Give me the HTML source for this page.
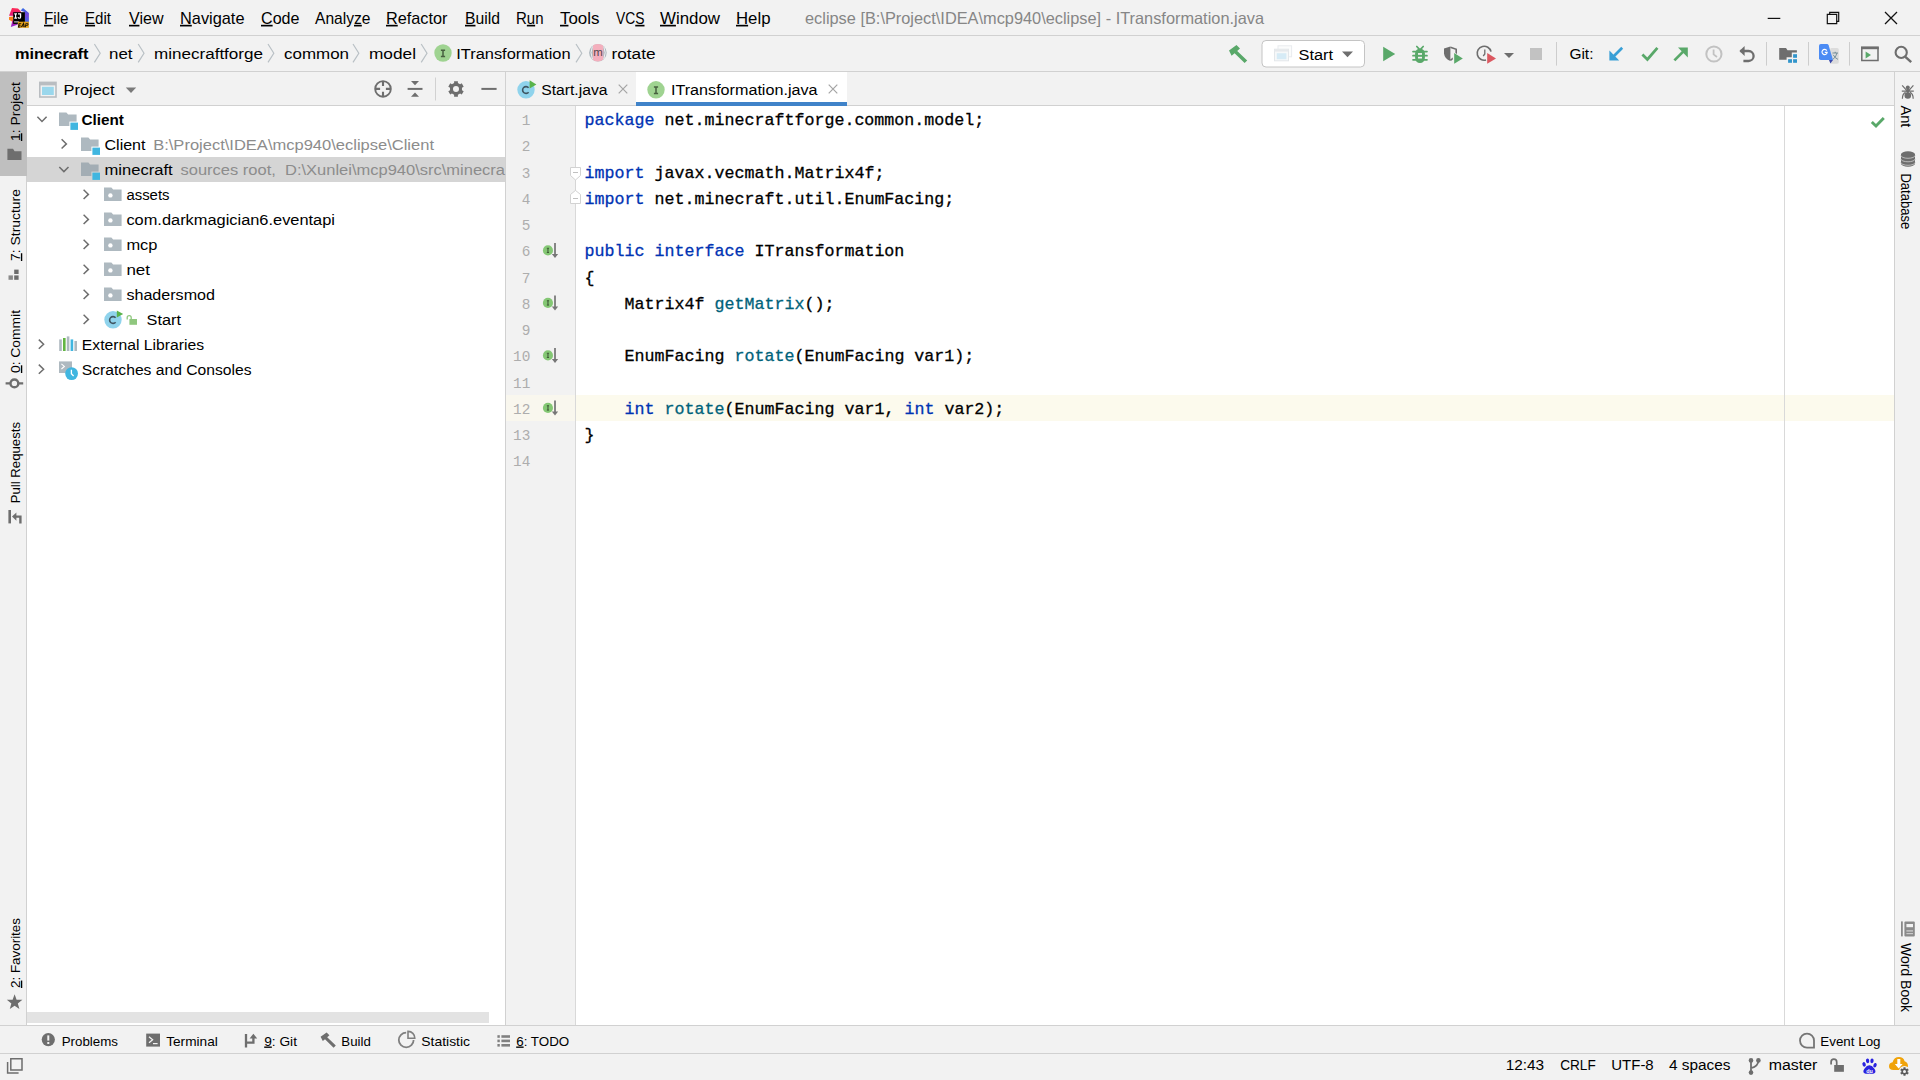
<!DOCTYPE html>
<html><head><meta charset="utf-8"><title>ITransformation.java</title>
<style>
html,body{margin:0;padding:0;background:#f2f2f2;overflow:hidden}
body{width:1920px;height:1080px;font-family:"Liberation Sans",sans-serif}
svg{display:block;position:absolute;left:0;top:0;font-family:"Liberation Sans",sans-serif}
</style></head><body>
<svg width="1920" height="1080" viewBox="0 0 1920 1080">
<rect x="0" y="0" width="1920" height="1080" fill="#f2f2f2" />
<rect x="27" y="106" width="478" height="919" fill="#fff" />
<rect x="27" y="157" width="478" height="25" fill="#d5d5d5" />
<rect x="506" y="106" width="70" height="919" fill="#f2f2f2" />
<rect x="576" y="106" width="1318" height="919" fill="#fff" />
<rect x="506" y="395" width="70" height="26" fill="#f9f7ee" />
<rect x="576" y="395" width="1318" height="26" fill="#fcfaed" />
<rect x="575" y="106" width="1" height="919" fill="#d9d9d9" />
<rect x="1784" y="106" width="1" height="919" fill="#d9d9d9" />
<rect x="636" y="72" width="211" height="33" fill="#fff" />
<rect x="0" y="35" width="1920" height="1" fill="#d1d1d1" />
<rect x="0" y="71" width="1920" height="1" fill="#d1d1d1" />
<rect x="27" y="105" width="1867" height="1" fill="#d1d1d1" />
<rect x="0" y="1025" width="1920" height="1" fill="#d1d1d1" />
<rect x="0" y="1053" width="1920" height="1" fill="#d1d1d1" />
<rect x="26" y="72" width="1" height="953" fill="#d1d1d1" />
<rect x="505" y="72" width="1" height="953" fill="#d1d1d1" />
<rect x="1894" y="72" width="1" height="953" fill="#d1d1d1" />
<rect x="636" y="102" width="211" height="4" fill="#4083c9" />
<rect x="27" y="1012" width="462" height="11" fill="#e3e3e3" />
<rect x="0" y="72" width="27" height="104" fill="#bfbfbf" />
<defs><linearGradient id="lgA" x1="0" y1="0" x2="0" y2="1"><stop offset="0" stop-color="#ff2a55"/><stop offset="1" stop-color="#e0187c"/></linearGradient><linearGradient id="lgB" x1="0" y1="0" x2="0" y2="1"><stop offset="0" stop-color="#2f6fe6"/><stop offset="0.5" stop-color="#7a45dd"/><stop offset="1" stop-color="#3d6fe8"/></linearGradient><linearGradient id="lgC" x1="0" y1="0" x2="0" y2="1"><stop offset="0" stop-color="#c0158f"/><stop offset="1" stop-color="#8f25d2"/></linearGradient></defs>
<path d="M12 8.1 L18 8.5 L21 11.6 L21 16 L9 15.8 Z" fill="url(#lgA)" />
<path d="M9 17 L13.4 16.6 L13.4 22.2 L9 19.8 Z" fill="#fc801d" />
<path d="M12.6 20 L18 24.4 L10.8 26.9 Z" fill="url(#lgC)" />
<path d="M23 7.9 L28.9 13 L28.9 22.4 L24.4 22.4 L24.4 12 L20.6 10.6 Z" fill="url(#lgB)" />
<rect x="13.2" y="12.2" width="11.7" height="11.7" fill="#000" />
<path d="M14.2 13.2 H17 V14.4 H16.2 V17.5 H17 V18.7 H14.2 V17.5 H15 V14.4 H14.2 Z" fill="#fff" />
<path d="M18 13.2 H21.2 V16.9 Q21.2 18.8 19.3 18.8 Q17.7 18.8 17.5 17.3 L18.7 17.1 Q18.8 17.7 19.3 17.7 Q19.9 17.7 19.9 16.9 V14.4 H18 Z" fill="#fff" />
<rect x="14.1" y="21.1" width="4.7" height="1.5" fill="#9a9a9a" />
<rect x="17.9" y="21.7" width="11" height="6.1" fill="#e5a11c" />
<g transform="translate(4.5 0.6) skewX(-12)" fill="none" stroke="#140e00" stroke-width="0.95"><path d="M21.6 23 H19.5 V26.4 H21.6 M19.5 24.7 H21.3"/><path d="M22.4 26.6 L23.9 22.8 L25.4 26.6 M23 25.5 H24.8"/><path d="M26.4 26.6 V23 H27.6 Q28.6 23 28.6 24 Q28.6 25 27.6 25 H26.4"/></g>
<rect x="1767.7" y="17.8" width="12.6" height="1.2" fill="#111" />
<path d="M1827.3 14.3 H1836.7 V23.7 H1827.3 Z" fill="none" stroke="#111" stroke-width="1.2" />
<path d="M1829.7 14.3 V12.3 H1838.7 V21.3 H1836.7" fill="none" stroke="#111" stroke-width="1.2" />
<path d="M1885 12 L1897 24 M1897 12 L1885 24" fill="none" stroke="#111" stroke-width="1.3" />
<path d="M94.4 44 L100.2 53.2 L94.4 62.4" fill="none" stroke="#b9c0c5" stroke-width="1.2" />
<path d="M138.2 44 L144.0 53.2 L138.2 62.4" fill="none" stroke="#b9c0c5" stroke-width="1.2" />
<path d="M268 44 L273.8 53.2 L268 62.4" fill="none" stroke="#b9c0c5" stroke-width="1.2" />
<path d="M353 44 L358.8 53.2 L353 62.4" fill="none" stroke="#b9c0c5" stroke-width="1.2" />
<path d="M421.2 44 L427.0 53.2 L421.2 62.4" fill="none" stroke="#b9c0c5" stroke-width="1.2" />
<path d="M576 44 L581.8 53.2 L576 62.4" fill="none" stroke="#b9c0c5" stroke-width="1.2" />
<circle cx="443" cy="53" r="8.7" fill="#9fd391" />
<path d="M440.9 50.199999999999996 H445.1 M440.9 56.6 H445.1 M443 50.199999999999996 V56.6" fill="none" stroke="#47603f" stroke-width="1.5" />
<clipPath id="mclip"><rect x="592.9" y="40" width="10.4" height="26"/></clipPath>
<circle cx="597.9" cy="52.7" r="8.8" fill="#adb7be" />
<circle cx="597.9" cy="52.7" r="8.8" fill="#f4afbd" clip-path="url(#mclip)"/>
<path d="M592.4 46.4 Q589.6 52.7 592.4 59 M603.8 46.4 Q606.6 52.7 603.8 59" fill="none" stroke="#f7f7f7" stroke-width="0.9" />
<text x="598.1" y="56.4" font-size="11.4" fill="#55474c" text-anchor="middle">m</text>
<path d="M1229 50.5 L1236.5 45 L1240 48.6 L1237.2 51 L1247.2 60.4 L1244.6 63 L1234.6 53.2 L1231.6 55.8 Z" fill="#59a869" />
<rect x="1262" y="40.5" width="102.5" height="26.5" rx="4" fill="#fff" stroke="#c4c4c4" stroke-width="1"/>
<rect x="1278" y="45.8" width="13.6" height="11" fill="#fbfcfc" stroke="#e9ecef" stroke-width="1"/>
<rect x="1274.5" y="49.2" width="14" height="11.6" fill="#f6f8f9" stroke="#e3e7ea" stroke-width="1"/>
<rect x="1274.5" y="49.2" width="14" height="2.4" fill="#e6e9ec" />
<rect x="1276.8" y="53.2" width="9.6" height="6" fill="#d6ebf6" />
<path d="M1342 51.5 L1353 51.5 L1347.5 57.2 Z" fill="#6e6e6e" />
<path d="M1383.2 46.8 L1395.2 54 L1383.2 61.2 Z" fill="#59a869" />
<rect x="1415.1" y="48.4" width="9.8" height="14.5" rx="4.7" ry="5.2" fill="#59a869"/>
<path d="M1413 51.6 H1427 M1413 55.7 H1427 M1413 59.8 H1427 M1416.8 46.5 L1419 48.8 M1423.2 46.5 L1421 48.8" fill="none" stroke="#59a869" stroke-width="1.7" stroke-linecap="round"/>
<rect x="1418" y="53.1" width="4" height="1.7" fill="#f2f2f2" />
<rect x="1418" y="56.8" width="4" height="1.7" fill="#f2f2f2" />
<path d="M1450.4 46.4 L1444 48.6 V53.4 Q1444.6 58.6 1450.4 61 Z" fill="#6e6e6e" />
<path d="M1450.4 47.2 L1456.2 49.2 V53.4 Q1455.8 57.4 1450.4 60.2" fill="none" stroke="#6e6e6e" stroke-width="1.6" />
<path d="M1452.8 51.6 L1464.6 58.4 L1452.8 65.2 Z" fill="#f2f2f2" />
<path d="M1454.2 53 L1462.8 58.4 L1454.2 63.8 Z" fill="#59a869" />
<path d="M1491 51.6 A7 7 0 1 0 1486 60" fill="none" stroke="#6e6e6e" stroke-width="1.6" />
<path d="M1484.8 49.6 V54 L1483.2 56" fill="none" stroke="#6e6e6e" stroke-width="1.3" />
<path d="M1487.2 53 L1496 58.4 L1487.2 63.8 Z" fill="#db5860" />
<path d="M1504 53 L1514 53 L1509.0 58 Z" fill="#6e6e6e" />
<rect x="1530" y="48" width="12" height="12" fill="#c2c2c2" />
<rect x="1556" y="42" width="1" height="23.6" fill="#cdcdcd" />
<path d="M1622.2 47.8 L1613 57" fill="none" stroke="#389fd6" stroke-width="2.7" />
<path d="M1609.4 50.6 V60.4 H1619.2 Z" fill="#389fd6" />
<path d="M1642.4 54.6 L1647.4 59.4 L1657.4 47.8" fill="none" stroke="#59a869" stroke-width="2.8" />
<path d="M1674.4 60.4 L1684.4 50.4" fill="none" stroke="#59a869" stroke-width="2.7" />
<path d="M1678 47.6 H1687.8 V57.4 Z" fill="#59a869" />
<circle cx="1713.9" cy="54" r="7.6" fill="none" stroke="#c2c2c2" stroke-width="2"/>
<path d="M1713.6 49.4 V54.4 L1717 57" fill="none" stroke="#c2c2c2" stroke-width="1.8" />
<path d="M1740.4 51 H1748.6 A5 5 0 0 1 1748.6 61 H1743.4" fill="none" stroke="#6e6e6e" stroke-width="2.3" />
<path d="M1744.6 46 L1739.4 51 L1744.6 56 Z" fill="#6e6e6e" />
<rect x="1766" y="42" width="1" height="23.6" fill="#cdcdcd" />
<path d="M1779.2 47.9 H1786 L1787.5 50.2 H1796.9 V52.6 H1791.8 V57.2 H1786.6 V59.8 H1779.2 Z" fill="#6e6e6e" />
<rect x="1793.1" y="54.2" width="3.9" height="3.6" fill="#3195cb" />
<rect x="1788.1" y="59.2" width="3.9" height="3.6" fill="#3195cb" />
<rect x="1793.1" y="59.2" width="3.9" height="3.6" fill="#3195cb" />
<rect x="1808" y="42" width="1" height="23.6" fill="#cdcdcd" />
<rect x="1830" y="48.1" width="8.8" height="15.6" rx="1.6" fill="#dcdcdc"/>
<path d="M1832.4 53 H1838 M1835.2 51.8 V53 M1837 53 Q1836 57.4 1832.6 59.6 M1833.2 54.8 Q1835 58.2 1838 59.4" fill="none" stroke="#5f7f8c" stroke-width="0.8" />
<path d="M1819 45.8 Q1819 44 1820.8 44 H1827 Q1828.2 44 1828.6 45.2 L1833 60 H1820.8 Q1819 60 1819 58.2 Z" fill="#4b8bf4" />
<path d="M1829 60 H1833 L1830.4 63.6 Z" fill="#3949ab" />
<path d="M1826.8 50.6 A2.6 2.6 0 1 0 1827.2 52.3 H1824.8" fill="none" stroke="#fff" stroke-width="1.15" />
<rect x="1849" y="42" width="1" height="23.6" fill="#cdcdcd" />
<path d="M1861.8 48 H1878 V60.6 H1861.8 Z" fill="none" stroke="#6e6e6e" stroke-width="1.5" />
<rect x="1861" y="46.4" width="17.8" height="2.8" fill="#6e6e6e" />
<path d="M1865.6 51.4 L1871 55 L1865.6 58.6 Z" fill="#59a869" />
<circle cx="1901.2" cy="52.4" r="5.6" fill="none" stroke="#6e6e6e" stroke-width="2.1"/>
<path d="M1905.4 56.8 L1911.2 62.2" fill="none" stroke="#6e6e6e" stroke-width="2.4" />
<rect x="39" y="81.6" width="17.8" height="16.2" fill="#b9bdc1" />
<rect x="40.6" y="85.4" width="14.6" height="10.8" fill="#f2f2f2" />
<rect x="42" y="86.8" width="11.8" height="8.2" fill="#9ad7ec" />
<path d="M125.8 87.6 L136.2 87.6 L131.0 93 Z" fill="#7a7a7a" />
<circle cx="383" cy="88.9" r="7.8" fill="none" stroke="#6e6e6e" stroke-width="1.9"/>
<path d="M383 81.1 V86 M383 91.8 V96.7 M375.2 88.9 H380.1 M385.9 88.9 H390.8" fill="none" stroke="#6e6e6e" stroke-width="2.1" />
<path d="M407.6 88.9 H422.5" fill="none" stroke="#6e6e6e" stroke-width="2" />
<path d="M411 81.1 H419 L415 85.3 Z M411 96.7 H419 L415 92.5 Z" fill="#6e6e6e" />
<rect x="435" y="77.5" width="1" height="23" fill="#d1d1d1" />
<path d="M454.09 81.13 L457.91 81.13 L457.89 83.10 L460.08 84.37 L461.77 83.36 L463.68 86.67 L461.97 87.63 L461.97 90.17 L463.68 91.13 L461.77 94.44 L460.08 93.43 L457.89 94.70 L457.91 96.67 L454.09 96.67 L454.11 94.70 L451.92 93.43 L450.23 94.44 L448.32 91.13 L450.03 90.17 L450.03 87.63 L448.32 86.67 L450.23 83.36 L451.92 84.37 L454.11 83.10 Z M453.0 88.9 a3.0 3.0 0 1 0 6.0 0 a3.0 3.0 0 1 0 -6.0 0 Z" fill="#6e6e6e" fill-rule="evenodd"/>
<rect x="481.4" y="87.9" width="15.2" height="2" fill="#6e6e6e" />
<circle cx="526" cy="89.8" r="8.7" fill="#8fd3ec" />
<path d="M528.6 87.8 A3.4 3.4 0 1 0 528.6 92.2" fill="none" stroke="#3f5561" stroke-width="1.6" />
<path d="M529.6 80.2 L536.4 84.4 L529.6 88.6 Z" fill="#59b34b" />
<path d="M618.7 84.7 L627.3 93.3 M627.3 84.7 L618.7 93.3" fill="none" stroke="#a4a4a4" stroke-width="1.2" />
<circle cx="656" cy="89.8" r="8.7" fill="#9fd391" />
<path d="M653.9 87.0 H658.1 M653.9 93.4 H658.1 M656 87.0 V93.4" fill="none" stroke="#47603f" stroke-width="1.5" />
<path d="M828.7 84.7 L837.3 93.3 M837.3 84.7 L828.7 93.3" fill="none" stroke="#a4a4a4" stroke-width="1.2" />
<path d="M37.40 116.80 L42.00 121.50 L46.60 116.80" fill="none" stroke="#6e6e6e" stroke-width="1.5" />
<path d="M59 112.4 H66.39 L68.15 114.60 H76.6 V126.0 H59 Z" fill="#aeb9c0" />
<rect x="69.4" y="121.60000000000001" width="9" height="9" fill="#fff" />
<rect x="70.4" y="122.60000000000001" width="7.6" height="7.3" fill="#40b6e0" />
<path d="M61.60 139.30 L66.40 143.90 L61.60 148.50" fill="none" stroke="#6e6e6e" stroke-width="1.5" />
<path d="M81 137.4 H88.39 L90.15 139.60 H98.6 V151.0 H81 Z" fill="#aeb9c0" />
<rect x="91.4" y="146.6" width="9" height="9" fill="#fff" />
<rect x="92.4" y="147.6" width="7.6" height="7.3" fill="#40b6e0" />
<path d="M59.30 166.90 L63.90 171.60 L68.50 166.90" fill="none" stroke="#6e6e6e" stroke-width="1.5" />
<path d="M81 162.4 H88.39 L90.15 164.60 H98.6 V176.0 H81 Z" fill="#a3adb4" />
<rect x="91.4" y="171.6" width="9" height="9" fill="#d5d5d5" />
<rect x="92.4" y="172.6" width="7.6" height="7.3" fill="#40b6e0" />
<path d="M83.60 189.80 L88.40 194.40 L83.60 199.00" fill="none" stroke="#6e6e6e" stroke-width="1.5" />
<path d="M104 187.4 H111.39 L113.15 189.60 H121.6 V201.0 H104 Z" fill="#aeb9c0" />
<circle cx="110.4" cy="195.4" r="2.2" fill="#fff" />
<path d="M83.60 214.80 L88.40 219.40 L83.60 224.00" fill="none" stroke="#6e6e6e" stroke-width="1.5" />
<path d="M104 212.4 H111.39 L113.15 214.60 H121.6 V226.0 H104 Z" fill="#aeb9c0" />
<circle cx="110.4" cy="220.4" r="2.2" fill="#fff" />
<path d="M83.60 239.80 L88.40 244.40 L83.60 249.00" fill="none" stroke="#6e6e6e" stroke-width="1.5" />
<path d="M104 237.4 H111.39 L113.15 239.60 H121.6 V251.0 H104 Z" fill="#aeb9c0" />
<circle cx="110.4" cy="245.4" r="2.2" fill="#fff" />
<path d="M83.60 264.80 L88.40 269.40 L83.60 274.00" fill="none" stroke="#6e6e6e" stroke-width="1.5" />
<path d="M104 262.4 H111.39 L113.15 264.60 H121.6 V276.0 H104 Z" fill="#aeb9c0" />
<circle cx="110.4" cy="270.4" r="2.2" fill="#fff" />
<path d="M83.60 289.80 L88.40 294.40 L83.60 299.00" fill="none" stroke="#6e6e6e" stroke-width="1.5" />
<path d="M104 287.4 H111.39 L113.15 289.60 H121.6 V301.0 H104 Z" fill="#aeb9c0" />
<circle cx="110.4" cy="295.4" r="2.2" fill="#fff" />
<path d="M83.60 314.80 L88.40 319.40 L83.60 324.00" fill="none" stroke="#6e6e6e" stroke-width="1.5" />
<circle cx="113" cy="319.8" r="8.7" fill="#8fd3ec" />
<path d="M115.6 317.8 A3.4 3.4 0 1 0 115.6 322.2" fill="none" stroke="#3f5561" stroke-width="1.6" />
<path d="M116.8 310.4 L123.2 314 L116.8 317.6 Z" fill="#59b34b" />
<rect x="129.4" y="319" width="7.6" height="5.8" fill="#8fc77e" />
<path d="M127.2 319.4 V317.6 A2 2 0 0 1 131.2 317.6 V319" fill="none" stroke="#8fc77e" stroke-width="1.3" />
<path d="M38.80 339.60 L43.60 344.20 L38.80 348.80" fill="none" stroke="#6e6e6e" stroke-width="1.5" />
<rect x="59.2" y="339.4" width="2.6" height="11.6" fill="#aeb9c0" />
<rect x="63" y="338" width="2.6" height="13" fill="#62b543" />
<rect x="66.8" y="336.4" width="2.6" height="14.6" fill="#aeb9c0" />
<rect x="70.6" y="339.4" width="2.6" height="11.6" fill="#40b6e0" />
<rect x="74.4" y="341" width="2.6" height="10" fill="#aeb9c0" />
<path d="M38.80 364.60 L43.60 369.20 L38.80 373.80" fill="none" stroke="#6e6e6e" stroke-width="1.5" />
<rect x="59" y="361.4" width="13" height="11.6" fill="#aeb9c0" />
<path d="M61.4 363.8 L64.4 366.4 L61.4 369" fill="none" stroke="#fff" stroke-width="1.1" />
<circle cx="71.6" cy="373.6" r="6.4" fill="#40b6e0" />
<path d="M71.4 369.8 V373.8 L73.6 376" fill="none" stroke="#fff" stroke-width="1.3" />
<circle cx="547.95" cy="250.39999999999998" r="5.05" fill="#84c774" />
<path d="M546.85 248.29999999999998 H549.0500000000001 M546.85 252.49999999999997 H549.0500000000001" fill="none" stroke="#35552c" stroke-width="1.0" />
<path d="M547.95 247.99999999999997 V252.79999999999998" fill="none" stroke="#4a6b40" stroke-width="1.3" />
<path d="M555.0 242.99999999999997 V254.59999999999997" fill="none" stroke="#808080" stroke-width="1.9" />
<path d="M551.85 254.09999999999997 H558.1500000000001 L555.0 258.09999999999997 Z" fill="#767676" />
<circle cx="547.95" cy="302.9" r="5.05" fill="#84c774" />
<path d="M546.85 300.79999999999995 H549.0500000000001 M546.85 305.0 H549.0500000000001" fill="none" stroke="#35552c" stroke-width="1.0" />
<path d="M547.95 300.5 V305.29999999999995" fill="none" stroke="#4a6b40" stroke-width="1.3" />
<path d="M555.0 295.5 V307.09999999999997" fill="none" stroke="#808080" stroke-width="1.9" />
<path d="M551.85 306.59999999999997 H558.1500000000001 L555.0 310.59999999999997 Z" fill="#767676" />
<circle cx="547.95" cy="355.4" r="5.05" fill="#84c774" />
<path d="M546.85 353.29999999999995 H549.0500000000001 M546.85 357.5 H549.0500000000001" fill="none" stroke="#35552c" stroke-width="1.0" />
<path d="M547.95 353.0 V357.79999999999995" fill="none" stroke="#4a6b40" stroke-width="1.3" />
<path d="M555.0 348.0 V359.59999999999997" fill="none" stroke="#808080" stroke-width="1.9" />
<path d="M551.85 359.09999999999997 H558.1500000000001 L555.0 363.09999999999997 Z" fill="#767676" />
<circle cx="547.95" cy="407.9" r="5.05" fill="#84c774" />
<path d="M546.85 405.79999999999995 H549.0500000000001 M546.85 410.0 H549.0500000000001" fill="none" stroke="#35552c" stroke-width="1.0" />
<path d="M547.95 405.5 V410.29999999999995" fill="none" stroke="#4a6b40" stroke-width="1.3" />
<path d="M555.0 400.5 V412.09999999999997" fill="none" stroke="#808080" stroke-width="1.9" />
<path d="M551.85 411.59999999999997 H558.1500000000001 L555.0 415.59999999999997 Z" fill="#767676" />
<path d="M575.5 180 V190.4" fill="none" stroke="#d6d6d6" stroke-width="1" />
<path d="M570.5 167.5 H580.5 V175.5 L575.5 180 L570.5 175.5 Z" fill="#fff" stroke="#d2d2d2" stroke-width="1" />
<path d="M573 172.5 H578" fill="none" stroke="#c0c0c0" stroke-width="1" />
<path d="M570.5 203.5 H580.5 V194.5 L575.5 190.4 L570.5 194.5 Z" fill="#fff" stroke="#d2d2d2" stroke-width="1" />
<path d="M573 198.5 H578" fill="none" stroke="#c0c0c0" stroke-width="1" />
<path d="M1871.8 122 L1876 126 L1883.8 118" fill="none" stroke="#59a869" stroke-width="2.9" />
<path d="M7.4 160 V148.8 H13 L14.6 151.2 H21.5 V160 Z" fill="#6e6e6e" />
<rect x="8.5" y="275.4" width="4.4" height="4.4" fill="#8a8a8a" />
<rect x="14.2" y="275.4" width="4.4" height="4.4" fill="#6e6e6e" />
<rect x="14.2" y="269.6" width="4.4" height="4.4" fill="#6e6e6e" />
<circle cx="14.4" cy="383.4" r="3.9" fill="none" stroke="#6e6e6e" stroke-width="2.4"/>
<path d="M5.6 383.4 H10.4 M18.4 383.4 H23.2" fill="none" stroke="#6e6e6e" stroke-width="2.4" />
<rect x="8.4" y="510" width="2.6" height="13.4" fill="#6e6e6e" />
<path d="M20.4 523.4 V516.6 H14" fill="none" stroke="#6e6e6e" stroke-width="2.4" />
<path d="M16.4 512.4 L12 516.6 L16.4 520.8 Z" fill="#6e6e6e" />
<path d="M14.60 994.20 L16.60 999.65 L22.40 999.87 L17.83 1003.45 L19.42 1009.03 L14.60 1005.80 L9.78 1009.03 L11.37 1003.45 L6.80 999.87 L12.60 999.65 Z" fill="#6e6e6e" />
<circle cx="1907.8" cy="87.4" r="2.0" fill="#6e6e6e" />
<ellipse cx="1907.8" cy="90.9" rx="1.7" ry="2.1" fill="#6e6e6e"/>
<circle cx="1907.8" cy="95.5" r="3.3" fill="#6e6e6e" />
<path d="M1906.6 90.4 L1902.2 85.4 M1909 90.4 L1913.4 85.4 M1901.8 91.2 H1913.8 M1905.6 92.4 Q1902.4 93.6 1902.4 98.8 M1910 92.4 Q1913.2 93.6 1913.2 98.8" fill="none" stroke="#6e6e6e" stroke-width="1.2" />
<path d="M1901 154.2 A7 2.9 0 0 1 1915 154.2 V163.8 A7 2.9 0 0 1 1901 163.8 Z" fill="#6e6e6e" />
<path d="M1900.8 155.4 A7.2 2.9 0 0 0 1915.2 155.4" fill="none" stroke="#c2c2c2" stroke-width="0.9" />
<path d="M1900.8 158.9 A7.2 2.9 0 0 0 1915.2 158.9" fill="none" stroke="#c2c2c2" stroke-width="0.9" />
<path d="M1900.8 162.4 A7.2 2.9 0 0 0 1915.2 162.4" fill="none" stroke="#c2c2c2" stroke-width="0.9" />
<rect x="1901" y="921.4" width="1.8" height="15" fill="#8a8a8a" />
<rect x="1904.4" y="921.4" width="10.4" height="15" rx="1" fill="#8a8a8a"/>
<rect x="1906.4" y="924" width="6.6" height="3.2" fill="#f2f2f2" />
<rect x="1906.4" y="930.2" width="6.6" height="1.4" fill="#c9c9c9" />
<rect x="1906.4" y="933" width="6.6" height="1.2" fill="#c9c9c9" />
<circle cx="48.3" cy="1039.6" r="6.6" fill="#6e6e6e" />
<rect x="47.3" y="1035.4" width="2" height="5.2" fill="#f2f2f2" />
<rect x="47.3" y="1042" width="2" height="2" fill="#f2f2f2" />
<rect x="146.2" y="1033.6" width="13.8" height="13" fill="#6e6e6e" />
<path d="M149 1036.8 L152.6 1039.8 L149 1042.8" fill="none" stroke="#f2f2f2" stroke-width="1.3" />
<rect x="153" y="1043" width="4.6" height="1.2" fill="#f2f2f2" />
<path d="M246 1034 V1047.4 M246 1042.6 H253.4 V1037" fill="none" stroke="#6e6e6e" stroke-width="2.3" />
<path d="M249.6 1038.4 L253.4 1033.8 L257.2 1038.4 Z" fill="#6e6e6e" />
<path d="M320.6 1036.8 L326.6 1032.4 L329.4 1035.2 L327.2 1037.2 L335.8 1045.6 L333.6 1047.8 L325 1039.2 L322.8 1041 Z" fill="#6e6e6e" />
<path d="M413.6 1040 A7.4 7.4 0 1 1 406.2 1032.6" fill="none" stroke="#808080" stroke-width="1.8" />
<path d="M408 1031.4 A6.6 6.6 0 0 1 414.8 1038.2 H408 Z" fill="none" stroke="#808080" stroke-width="1.6" />
<rect x="497.4" y="1035.2" width="2.4" height="2.6" fill="#808080" />
<rect x="501.4" y="1035.2" width="8.6" height="2.6" fill="#808080" />
<rect x="497.4" y="1039.6000000000001" width="2.4" height="2.6" fill="#808080" />
<rect x="501.4" y="1039.6000000000001" width="8.6" height="2.6" fill="#808080" />
<rect x="497.4" y="1044.0" width="2.4" height="2.6" fill="#808080" />
<rect x="501.4" y="1044.0" width="8.6" height="2.6" fill="#808080" />
<path d="M1814 1047.6 V1040.6 A7 7 0 1 0 1807 1047.6 Z" fill="none" stroke="#757575" stroke-width="1.8" />
<path d="M10.8 1058.8 H22 V1070 H10.8 Z" fill="none" stroke="#6e6e6e" stroke-width="1.5" />
<path d="M7.6 1062 V1073 H18.6" fill="none" stroke="#6e6e6e" stroke-width="1.5" />
<circle cx="1751" cy="1060.4" r="2.3" fill="#6e6e6e" />
<circle cx="1751" cy="1072.6" r="2.3" fill="#6e6e6e" />
<circle cx="1758.4" cy="1060.4" r="2.3" fill="#6e6e6e" />
<path d="M1751 1060.4 V1072.6 M1758.4 1060.4 Q1758.4 1066 1751 1068.2" fill="none" stroke="#6e6e6e" stroke-width="1.8" />
<rect x="1834.2" y="1065" width="9.7" height="6.8" fill="#6e6e6e" />
<path d="M1831.1 1064.6 V1062 A2.8 2.8 0 0 1 1836.7 1062 V1065" fill="none" stroke="#6e6e6e" stroke-width="1.7" />
<path d="M1869.4 1065.2 Q1872 1065.2 1874.2 1068.4 Q1876.6 1071.6 1874.4 1073.2 Q1872.6 1074.2 1869.4 1073.6 Q1866.2 1074.2 1864.4 1073.2 Q1862.2 1071.6 1864.6 1068.4 Q1866.8 1065.2 1869.4 1065.2 Z" fill="#2a23df" />
<ellipse cx="1864.1" cy="1064.4" rx="1.65" ry="2.3" fill="#2a23df" transform="rotate(-20 1864.1 1064.4)"/>
<ellipse cx="1867.6" cy="1060.9" rx="1.65" ry="2.3" fill="#2a23df" transform="rotate(-6 1867.6 1060.9)"/>
<ellipse cx="1872" cy="1060.9" rx="1.65" ry="2.3" fill="#2a23df" transform="rotate(6 1872 1060.9)"/>
<ellipse cx="1875" cy="1065.2" rx="1.65" ry="2.3" fill="#2a23df" transform="rotate(20 1875 1065.2)"/>
<text x="1866.2" y="1072.6" font-size="5" font-weight="bold" fill="#fff" textLength="6.6" lengthAdjust="spacingAndGlyphs">du</text>
<path d="M1893.4 1070 Q1889 1070 1889 1066.2 Q1889 1062.8 1892.6 1062.2 Q1894 1057 1899 1057 Q1903.4 1057 1904.6 1061.2 Q1908 1062.4 1908 1066 Q1908 1070 1903.6 1070 Z" fill="#f0a30a" />
<rect x="1897.3" y="1059" width="3" height="6" fill="#fff" />
<path d="M1894.8 1064 H1902.6 L1898.7 1068.6 Z" fill="#fff" />
<circle cx="1904.5" cy="1071.5" r="5.6" fill="#f2f2f2" />
<path d="M1903.43 1067.13 L1905.57 1067.13 L1905.49 1068.46 L1906.64 1069.12 L1907.75 1068.39 L1908.82 1070.24 L1907.63 1070.83 L1907.63 1072.17 L1908.82 1072.76 L1907.75 1074.61 L1906.64 1073.88 L1905.49 1074.54 L1905.57 1075.87 L1903.43 1075.87 L1903.51 1074.54 L1902.36 1073.88 L1901.25 1074.61 L1900.18 1072.76 L1901.37 1072.17 L1901.37 1070.83 L1900.18 1070.24 L1901.25 1068.39 L1902.36 1069.12 L1903.51 1068.46 Z M1903.0 1071.5 a1.5 1.5 0 1 0 3.0 0 a1.5 1.5 0 1 0 -3.0 0 Z" fill="#5a5a5a" fill-rule="evenodd"/>
<text x="44.00" y="23.80" font-size="16.6" fill="#000" textLength="24.50" lengthAdjust="spacingAndGlyphs" ><tspan text-decoration="underline">F</tspan>ile</text>
<text x="85.00" y="23.80" font-size="16.6" fill="#000" textLength="26.00" lengthAdjust="spacingAndGlyphs" ><tspan text-decoration="underline">E</tspan>dit</text>
<text x="129.00" y="23.80" font-size="16.6" fill="#000" textLength="34.50" lengthAdjust="spacingAndGlyphs" ><tspan text-decoration="underline">V</tspan>iew</text>
<text x="180.00" y="23.80" font-size="16.6" fill="#000" textLength="64.50" lengthAdjust="spacingAndGlyphs" ><tspan text-decoration="underline">N</tspan>avigate</text>
<text x="261.00" y="23.80" font-size="16.6" fill="#000" textLength="38.50" lengthAdjust="spacingAndGlyphs" ><tspan text-decoration="underline">C</tspan>ode</text>
<text x="315.00" y="23.80" font-size="16.6" fill="#000" textLength="55.50" lengthAdjust="spacingAndGlyphs" >Analy<tspan text-decoration="underline">z</tspan>e</text>
<text x="386.00" y="23.80" font-size="16.6" fill="#000" textLength="61.50" lengthAdjust="spacingAndGlyphs" ><tspan text-decoration="underline">R</tspan>efactor</text>
<text x="465.00" y="23.80" font-size="16.6" fill="#000" textLength="35.00" lengthAdjust="spacingAndGlyphs" ><tspan text-decoration="underline">B</tspan>uild</text>
<text x="516.00" y="23.80" font-size="16.6" fill="#000" textLength="27.50" lengthAdjust="spacingAndGlyphs" >R<tspan text-decoration="underline">u</tspan>n</text>
<text x="560.00" y="23.80" font-size="16.6" fill="#000" textLength="39.50" lengthAdjust="spacingAndGlyphs" ><tspan text-decoration="underline">T</tspan>ools</text>
<text x="616.00" y="23.80" font-size="16.6" fill="#000" textLength="28.50" lengthAdjust="spacingAndGlyphs" >VC<tspan text-decoration="underline">S</tspan></text>
<text x="660.00" y="23.80" font-size="16.6" fill="#000" textLength="60.00" lengthAdjust="spacingAndGlyphs" ><tspan text-decoration="underline">W</tspan>indow</text>
<text x="736.00" y="23.80" font-size="16.6" fill="#000" textLength="34.50" lengthAdjust="spacingAndGlyphs" ><tspan text-decoration="underline">H</tspan>elp</text>
<text x="805.00" y="23.50" font-size="16.5" fill="#868686" textLength="459.00" lengthAdjust="spacingAndGlyphs" >eclipse [B:\Project\IDEA\mcp940\eclipse] - ITransformation.java</text>
<text x="15.00" y="58.50" font-size="15.5" fill="#000" font-weight="bold" textLength="73.50" lengthAdjust="spacingAndGlyphs" >minecraft</text>
<text x="109.00" y="58.50" font-size="15.5" fill="#000" textLength="23.50" lengthAdjust="spacingAndGlyphs" >net</text>
<text x="154.00" y="58.50" font-size="15.5" fill="#000" textLength="109.00" lengthAdjust="spacingAndGlyphs" >minecraftforge</text>
<text x="284.00" y="58.50" font-size="15.5" fill="#000" textLength="65.00" lengthAdjust="spacingAndGlyphs" >common</text>
<text x="369.00" y="58.50" font-size="15.5" fill="#000" textLength="47.00" lengthAdjust="spacingAndGlyphs" >model</text>
<text x="456.20" y="58.50" font-size="15.5" fill="#000" textLength="114.40" lengthAdjust="spacingAndGlyphs" >ITransformation</text>
<text x="611.50" y="58.50" font-size="15.5" fill="#000" textLength="44.10" lengthAdjust="spacingAndGlyphs" >rotate</text>
<text x="1298.50" y="60.20" font-size="15.5" fill="#000" textLength="34.50" lengthAdjust="spacingAndGlyphs" >Start</text>
<text x="1569.40" y="59.40" font-size="15.5" fill="#000" textLength="24.10" lengthAdjust="spacingAndGlyphs" >Git:</text>
<text x="63.50" y="95.00" font-size="15.5" fill="#000" textLength="51.00" lengthAdjust="spacingAndGlyphs" >Project</text>
<text x="541.20" y="95.00" font-size="15.5" fill="#000" textLength="66.30" lengthAdjust="spacingAndGlyphs" >Start.java</text>
<text x="671.00" y="95.00" font-size="15.5" fill="#000" textLength="146.50" lengthAdjust="spacingAndGlyphs" >ITransformation.java</text>
<text x="81.40" y="124.90" font-size="15.5" fill="#000" font-weight="bold" textLength="42.50" lengthAdjust="spacingAndGlyphs" >Client</text>
<text x="104.50" y="149.90" font-size="15.5" fill="#000" textLength="41.00" lengthAdjust="spacingAndGlyphs" >Client</text>
<text x="153.20" y="149.90" font-size="15.5" fill="#8c8c8c" textLength="280.80" lengthAdjust="spacingAndGlyphs" >B:\Project\IDEA\mcp940\eclipse\Client</text>
<text x="104.50" y="174.90" font-size="15.5" fill="#000" textLength="68.10" lengthAdjust="spacingAndGlyphs" >minecraft</text>
<text x="180.50" y="174.90" font-size="15.5" fill="#8c8c8c" textLength="324.50" lengthAdjust="spacingAndGlyphs" style="white-space:pre">sources root,  D:\Xunlei\mcp940\src\minecra</text>
<text x="126.40" y="199.90" font-size="15.5" fill="#000" textLength="43.10" lengthAdjust="spacingAndGlyphs" >assets</text>
<text x="126.40" y="224.90" font-size="15.5" fill="#000" textLength="208.60" lengthAdjust="spacingAndGlyphs" >com.darkmagician6.eventapi</text>
<text x="126.40" y="249.90" font-size="15.5" fill="#000" textLength="31.10" lengthAdjust="spacingAndGlyphs" >mcp</text>
<text x="126.40" y="274.90" font-size="15.5" fill="#000" textLength="23.60" lengthAdjust="spacingAndGlyphs" >net</text>
<text x="126.40" y="299.90" font-size="15.5" fill="#000" textLength="88.60" lengthAdjust="spacingAndGlyphs" >shadersmod</text>
<text x="146.60" y="324.90" font-size="15.5" fill="#000" textLength="34.40" lengthAdjust="spacingAndGlyphs" >Start</text>
<text x="81.80" y="349.90" font-size="15.5" fill="#000" textLength="122.40" lengthAdjust="spacingAndGlyphs" >External Libraries</text>
<text x="81.80" y="374.90" font-size="15.5" fill="#000" textLength="169.80" lengthAdjust="spacingAndGlyphs" >Scratches and Consoles</text>
<text x="61.70" y="1045.50" font-size="13.6" fill="#000" textLength="56.30" lengthAdjust="spacingAndGlyphs" >Problems</text>
<text x="166.20" y="1045.50" font-size="13.6" fill="#000" textLength="51.60" lengthAdjust="spacingAndGlyphs" >Terminal</text>
<text x="264.20" y="1045.50" font-size="13.6" fill="#000" textLength="32.80" lengthAdjust="spacingAndGlyphs" ><tspan text-decoration="underline">9</tspan>: Git</text>
<text x="341.30" y="1045.50" font-size="13.6" fill="#000" textLength="29.50" lengthAdjust="spacingAndGlyphs" >Build</text>
<text x="421.30" y="1045.50" font-size="13.6" fill="#000" textLength="48.70" lengthAdjust="spacingAndGlyphs" >Statistic</text>
<text x="516.20" y="1045.50" font-size="13.6" fill="#000" textLength="53.00" lengthAdjust="spacingAndGlyphs" ><tspan text-decoration="underline">6</tspan>: TODO</text>
<text x="1820.30" y="1045.50" font-size="13.6" fill="#000" textLength="60.20" lengthAdjust="spacingAndGlyphs" >Event Log</text>
<text x="1505.70" y="1070.10" font-size="15.2" fill="#000" textLength="38.50" lengthAdjust="spacingAndGlyphs" >12:43</text>
<text x="1560.20" y="1070.10" font-size="15.2" fill="#000" textLength="35.50" lengthAdjust="spacingAndGlyphs" >CRLF</text>
<text x="1611.30" y="1070.10" font-size="15.2" fill="#000" textLength="42.40" lengthAdjust="spacingAndGlyphs" >UTF-8</text>
<text x="1669.00" y="1070.10" font-size="15.2" fill="#000" textLength="61.50" lengthAdjust="spacingAndGlyphs" >4 spaces</text>
<text x="1768.70" y="1070.10" font-size="15.2" fill="#000" textLength="48.60" lengthAdjust="spacingAndGlyphs" >master</text>
<text transform="translate(19.9,141) rotate(-90)" font-size="13.5" textLength="58.8" lengthAdjust="spacingAndGlyphs"><tspan text-decoration="underline">1</tspan>: Project</text>
<text transform="translate(19.9,261) rotate(-90)" font-size="13.5" textLength="72.0" lengthAdjust="spacingAndGlyphs"><tspan text-decoration="underline">7</tspan>: Structure</text>
<text transform="translate(19.9,373) rotate(-90)" font-size="13.5" textLength="63.0" lengthAdjust="spacingAndGlyphs"><tspan text-decoration="underline">0</tspan>: Commit</text>
<text transform="translate(19.9,503.3) rotate(-90)" font-size="13.5" textLength="81.3" lengthAdjust="spacingAndGlyphs">Pull Requests</text>
<text transform="translate(19.9,988) rotate(-90)" font-size="13.5" textLength="70.0" lengthAdjust="spacingAndGlyphs"><tspan text-decoration="underline">2</tspan>: Favorites</text>
<text transform="translate(1900.6,105.4) rotate(90)" font-size="14.6" textLength="22.0" lengthAdjust="spacingAndGlyphs">Ant</text>
<text transform="translate(1900.6,173.4) rotate(90)" font-size="14.6" textLength="56.0" lengthAdjust="spacingAndGlyphs">Database</text>
<text transform="translate(1900.6,943) rotate(90)" font-size="14.6" textLength="69.0" lengthAdjust="spacingAndGlyphs">Word Book</text>
<text x="530.3" y="125.00" font-family="Liberation Mono" font-size="14.4" fill="#adadad" text-anchor="end">1</text>
<text x="584.5" y="125.00" font-family="Liberation Mono" font-size="16.667" fill="#000" stroke="#000" stroke-width="0.3" style="white-space:pre"><tspan fill="#0033b3" stroke="#0033b3">package</tspan> net.minecraftforge.common.model;</text>
<text x="530.3" y="151.25" font-family="Liberation Mono" font-size="14.4" fill="#adadad" text-anchor="end">2</text>
<text x="530.3" y="177.50" font-family="Liberation Mono" font-size="14.4" fill="#adadad" text-anchor="end">3</text>
<text x="584.5" y="177.50" font-family="Liberation Mono" font-size="16.667" fill="#000" stroke="#000" stroke-width="0.3" style="white-space:pre"><tspan fill="#0033b3" stroke="#0033b3">import</tspan> javax.vecmath.Matrix4f;</text>
<text x="530.3" y="203.75" font-family="Liberation Mono" font-size="14.4" fill="#adadad" text-anchor="end">4</text>
<text x="584.5" y="203.75" font-family="Liberation Mono" font-size="16.667" fill="#000" stroke="#000" stroke-width="0.3" style="white-space:pre"><tspan fill="#0033b3" stroke="#0033b3">import</tspan> net.minecraft.util.EnumFacing;</text>
<text x="530.3" y="230.00" font-family="Liberation Mono" font-size="14.4" fill="#adadad" text-anchor="end">5</text>
<text x="530.3" y="256.25" font-family="Liberation Mono" font-size="14.4" fill="#adadad" text-anchor="end">6</text>
<text x="584.5" y="256.25" font-family="Liberation Mono" font-size="16.667" fill="#000" stroke="#000" stroke-width="0.3" style="white-space:pre"><tspan fill="#0033b3" stroke="#0033b3">public interface</tspan> ITransformation</text>
<text x="530.3" y="282.50" font-family="Liberation Mono" font-size="14.4" fill="#adadad" text-anchor="end">7</text>
<text x="584.5" y="282.50" font-family="Liberation Mono" font-size="16.667" fill="#000" stroke="#000" stroke-width="0.3" style="white-space:pre">{</text>
<text x="530.3" y="308.75" font-family="Liberation Mono" font-size="14.4" fill="#adadad" text-anchor="end">8</text>
<text x="584.5" y="308.75" font-family="Liberation Mono" font-size="16.667" fill="#000" stroke="#000" stroke-width="0.3" style="white-space:pre">    Matrix4f <tspan fill="#00627a" stroke="#00627a">getMatrix</tspan>();</text>
<text x="530.3" y="335.00" font-family="Liberation Mono" font-size="14.4" fill="#adadad" text-anchor="end">9</text>
<text x="530.3" y="361.25" font-family="Liberation Mono" font-size="14.4" fill="#adadad" text-anchor="end">10</text>
<text x="584.5" y="361.25" font-family="Liberation Mono" font-size="16.667" fill="#000" stroke="#000" stroke-width="0.3" style="white-space:pre">    EnumFacing <tspan fill="#00627a" stroke="#00627a">rotate</tspan>(EnumFacing var1);</text>
<text x="530.3" y="387.50" font-family="Liberation Mono" font-size="14.4" fill="#adadad" text-anchor="end">11</text>
<text x="530.3" y="413.75" font-family="Liberation Mono" font-size="14.4" fill="#adadad" text-anchor="end">12</text>
<text x="584.5" y="413.75" font-family="Liberation Mono" font-size="16.667" fill="#000" stroke="#000" stroke-width="0.3" style="white-space:pre">    <tspan fill="#0033b3" stroke="#0033b3">int</tspan> <tspan fill="#00627a" stroke="#00627a">rotate</tspan>(EnumFacing var1, <tspan fill="#0033b3" stroke="#0033b3">int</tspan> var2);</text>
<text x="530.3" y="440.00" font-family="Liberation Mono" font-size="14.4" fill="#adadad" text-anchor="end">13</text>
<text x="584.5" y="440.00" font-family="Liberation Mono" font-size="16.667" fill="#000" stroke="#000" stroke-width="0.3" style="white-space:pre">}</text>
<text x="530.3" y="466.25" font-family="Liberation Mono" font-size="14.4" fill="#adadad" text-anchor="end">14</text>
</svg>
</body></html>
